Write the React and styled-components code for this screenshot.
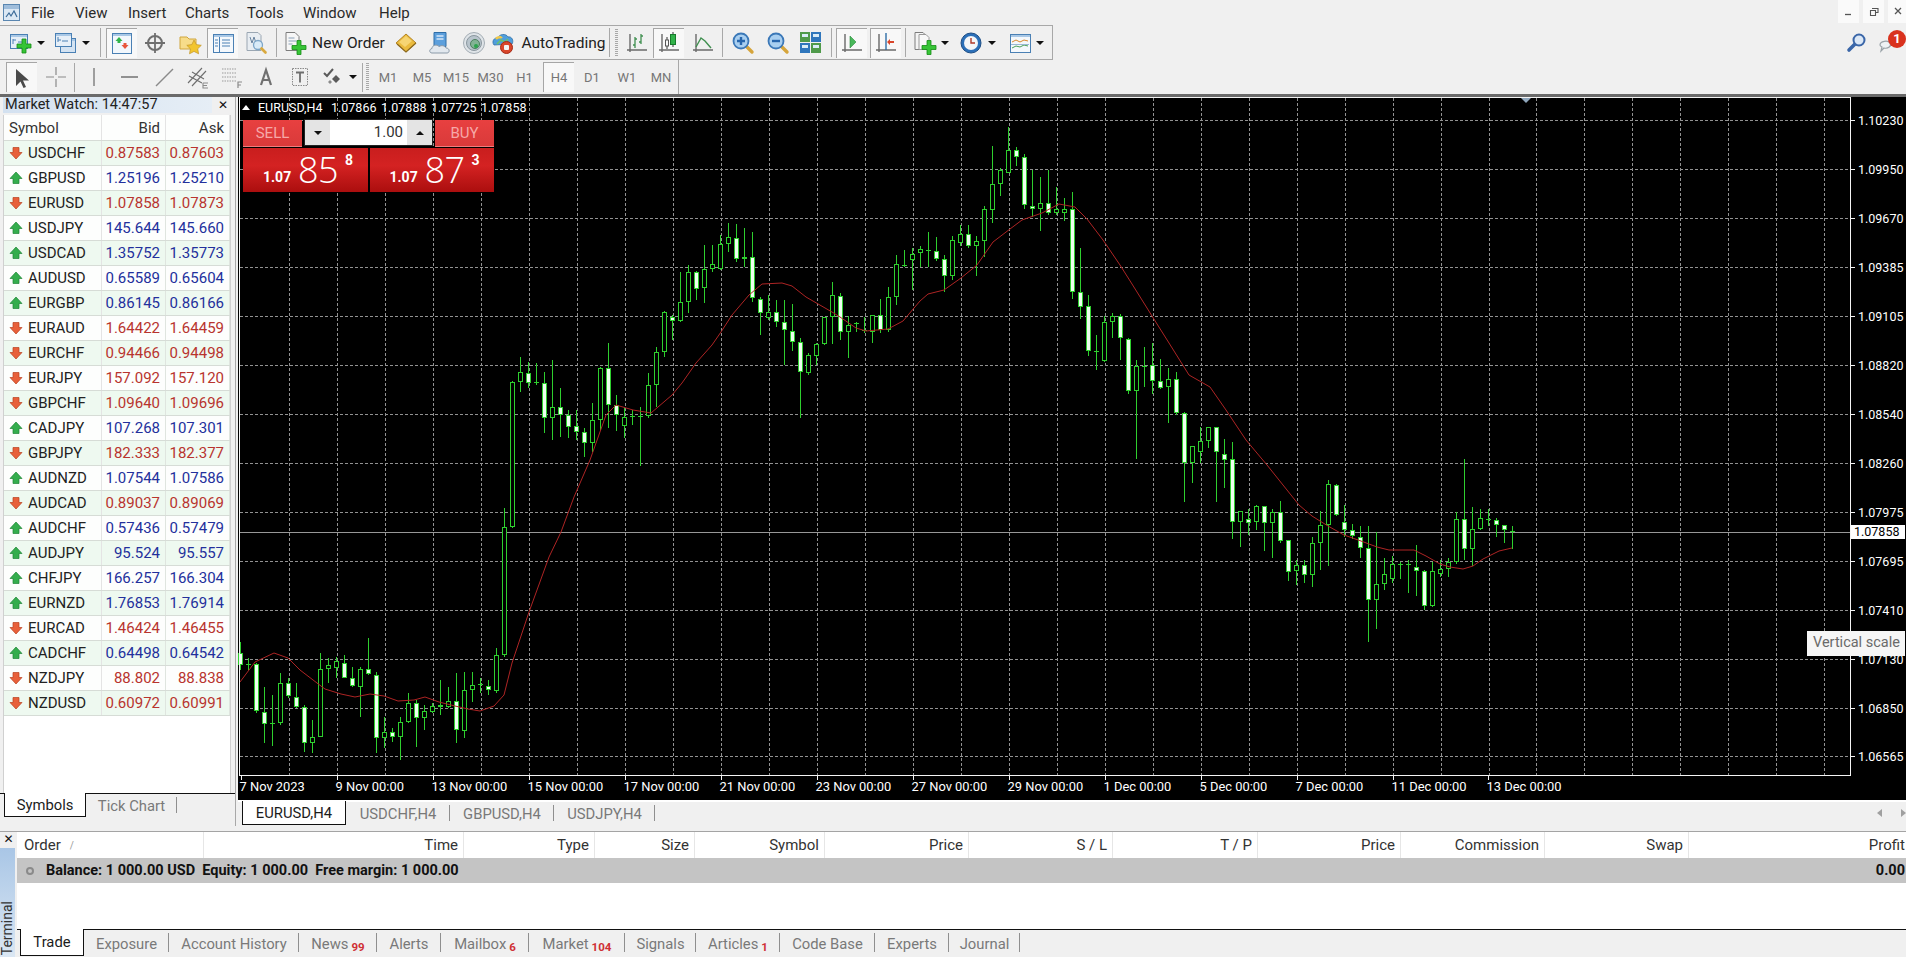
import React from 'react'
import styled, { createGlobalStyle } from 'styled-components'

const UI = `Roboto, "Liberation Sans", sans-serif`

const GlobalStyle = createGlobalStyle`
  html, body { margin: 0; padding: 0; background: #f0f0f0; overflow: hidden; }
  #root { width: 1906px; height: 957px; }
`

const Page = styled.div`
  width: 1906px;
  height: 957px;
  display: flex;
  flex-direction: column;
  background: #f0f0f0;
  font-family: ${UI};
  font-size: 15px;
  color: #222;
  overflow: hidden;
`

/* menu */
const MenuBar = styled.div`
  height: 25px;
  flex: none;
  display: flex;
  align-items: center;
  padding-left: 2px;
  position: relative;
`
const MenuItem = styled.span`
  position: absolute;
  left: ${p => p.$x}px;
  top: 4px;
  font-size: 15px;
  color: #2a2a2a;
`
const WinButtons = styled.div`
  margin-left: auto;
  display: flex;
  gap: 4px;
  height: 23px;
  align-self: flex-start;
  margin-right: -3px;
`
const WinButton = styled.div`
  width: 21px;
  height: 23px;
  background: #fafafa;
  display: flex;
  align-items: center;
  justify-content: center;
`

/* toolbars */
const ToolRow = styled.div`
  height: ${p => p.$h}px;
  flex: none;
  box-sizing: border-box;
  display: flex;
  align-items: center;
  position: relative;
  border-bottom: ${p => p.$dark ? '3px solid #6a6a6a' : 'none'};
`
const ToolGroup = styled.div`
  height: 100%;
  width: ${p => p.$w}px;
  box-sizing: border-box;
  display: flex;
  align-items: center;
  padding-left: 5px;
  border-top: ${p => p.$top ? '1px solid #a8a8a8' : 'none'};
  border-bottom: ${p => p.$bottom ? '1px solid #a8a8a8' : 'none'};
  border-right: 1px solid #a8a8a8;
`
const ToolBtn = styled.div`
  width: ${p => p.$w}px;
  height: 30px;
  flex: none;
  box-sizing: border-box;
  display: flex;
  align-items: center;
  justify-content: center;
  gap: ${p => p.$gap || 0}px;
  margin-left: ${p => p.$ml || 0}px;
  background: ${p => p.$pressed ? '#f8f8f8' : 'transparent'};
  border-top: ${p => p.$pressed ? '1px solid #a6a6a6' : 'none'};
  border-left: ${p => p.$pressed ? '1px solid #a6a6a6' : 'none'};
  font-size: 15.5px;
  color: #222;
`
const Sep = styled.div`
  width: 1px;
  height: 29px;
  flex: none;
  background: #a8a8a8;
  margin: 0 ${p => p.$m || 0}px;
`
const Grip = styled.div`
  width: 3px;
  height: 28px;
  flex: none;
  margin: 0 ${p => p.$m || 0}px;
  background: repeating-linear-gradient(to bottom, #a8a8a8 0 1px, #f0f0f0 1px 2px);
`
const Caret = styled.i`
  display: block;
  width: 0;
  height: 0;
  border-left: 4px solid transparent;
  border-right: 4px solid transparent;
  border-top: 4px solid #111;
`
const TfBtn = styled(ToolBtn)`
  font-size: 13px;
  color: #767676;
`
const SearchSpot = styled.div`
  position: absolute;
  left: 1846px;
  top: 7px;
`
const ChatSpot = styled.div`
  position: absolute;
  left: 1878px;
  top: 12px;
`
const AlertBadge = styled.div`
  position: absolute;
  left: 1888px;
  top: 5px;
  width: 18px;
  height: 18px;
  border-radius: 50%;
  background: #d9321e;
  color: #fff;
  text-align: center;
  line-height: 18px;
  font-size: 13px;
  font-weight: 700;
`

/* main */
const Main = styled.div`
  height: 729px;
  flex: none;
  display: flex;
`
const Watch = styled.div`
  width: 236px;
  flex: none;
  box-sizing: border-box;
  display: flex;
  flex-direction: column;
  border-right: 1px solid #a8a8a8;
`
const WatchTitle = styled.div`
  height: 16px;
  flex: none;
  display: flex;
  align-items: center;
  justify-content: space-between;
  padding: 0 7px 0 3px;
`
const WatchCaption = styled.div`
  width: 209px;
  height: 16px;
  padding-left: 2px;
  box-sizing: border-box;
  line-height: 16px;
  font-size: 14.5px;
  white-space: nowrap;
  background: linear-gradient(to right, #d3e1f0, #e6eef6);
`
const CloseX = styled.span`
  font-family: "DejaVu Sans", sans-serif;
  font-size: 12px;
  line-height: 14px;
  color: #111;
`
const WatchTable = styled.div`
  flex: 1;
  margin: 2px 4px 0 3px;
  background: #fff;
  border-left: 1px solid #d0d0d0;
  border-right: 1px solid #d0d0d0;
  display: flex;
  flex-direction: column;
`
const Row = styled.div`
  display: grid;
  grid-template-columns: 98px 64px 64px;
  height: ${p => p.$h}px;
  flex: none;
  box-sizing: border-box;
  border-bottom: 1px solid #d6dcd6;
  background: ${p => p.$tint ? '#eef9f0' : '#fdfefd'};
`
const HeadCell = styled.div`
  display: flex;
  align-items: center;
  justify-content: ${p => p.$left ? 'flex-start' : 'flex-end'};
  padding: 0 5px;
  font-size: 15px;
  color: #333;
  border-right: 1px solid #e4e4e4;
`
const SymCell = styled(HeadCell)`
  padding-left: 5px;
  gap: 5px;
  color: #222;
`
const PriceCell = styled.div`
  display: flex;
  align-items: center;
  justify-content: flex-end;
  padding-right: 5px;
  font-size: 15px;
  color: ${p => p.$down ? '#b8342e' : '#23309c'};
  border-right: 1px solid #dfe5df;
`

/* tabs */
const TabStrip = styled.div`
  height: ${p => p.$h}px;
  flex: none;
  box-sizing: border-box;
  display: flex;
  padding-left: ${p => p.$pad}px;
  padding-bottom: ${p => p.$pb || 0}px;
  border-top: ${p => p.$line ? '1px solid #111' : 'none'};
  align-items: stretch;
`
const Tab = styled.div`
  width: ${p => p.$w}px;
  flex: none;
  box-sizing: border-box;
  position: relative;
  display: flex;
  align-items: center;
  justify-content: center;
  font-size: 14.8px;
  color: ${p => p.$active ? '#1c1c1c' : '#797979'};
  background: ${p => p.$active ? '#fff' : 'transparent'};
  margin-top: ${p => p.$active ? '-1px' : '0'};
  margin-bottom: ${p => p.$active ? '1px' : '0'};
  border: ${p => p.$active ? '1px solid #111' : 'none'};
  border-top: none;
  &::after {
    content: '';
    display: ${p => p.$active ? 'none' : 'block'};
    position: absolute;
    right: 0;
    top: 3px;
    bottom: 5px;
    width: 1px;
    background: #8f8f8f;
  }
`
const TabCount = styled.b`
  color: #cf2f35;
  font-size: 11.5px;
  align-self: flex-end;
  margin: 0 0 3px 3px;
`

/* chart */
const ChartCol = styled.div`
  flex: 1;
  min-width: 0;
  display: flex;
  flex-direction: column;
  margin-left: 2px;
`
const ChartBox = styled.div`
  position: relative;
  height: 703px;
  flex: none;
  background: #000;
  border-bottom: 2px solid #fff;
`
const ChartSvg = styled.svg`
  display: block;
`
const AxisText = styled.text`
  font-family: ${UI};
  font-size: 12.5px;
  fill: #fff;
`
const TimeText = styled(AxisText)`
  font-size: 12.9px;
`
const ChartTitle = styled.div`
  position: absolute;
  left: 4px;
  top: 2px;
  display: flex;
  align-items: center;
  color: #fff;
  font-size: 12.5px;
  height: 16px;
  white-space: nowrap;
`
const TitleTri = styled.i`
  width: 0;
  height: 0;
  border-left: 4px solid transparent;
  border-right: 4px solid transparent;
  border-bottom: 5px solid #fff;
  margin-right: 8px;
`
const TitleNum = styled.span`
  width: 50px;
  flex: none;
`
const TitleName = styled.span`
  width: 73px;
  flex: none;
`
const OneClick = styled.div`
  position: absolute;
  left: 5px;
  top: 23px;
  width: 251px;
  display: flex;
  flex-direction: column;
  gap: 1px;
`
const TradeRow = styled.div`
  display: flex;
  height: 27px;
`
const SideLabel = styled.div`
  width: ${p => p.$w}px;
  flex: none;
  box-sizing: border-box;
  display: flex;
  align-items: center;
  justify-content: center;
  background: linear-gradient(to bottom, #e84040, #d93a3a);
  border-bottom: 1px solid #ee7d7d;
  color: #f6a8a8;
  font-size: 15px;
`
const Stepper = styled.div`
  width: 127px;
  height: 25px;
  flex: none;
  margin: 0 3px;
  display: grid;
  grid-template-columns: 25px 1fr 25px;
  background: #fff;
  outline: 1px solid #222;
`
const StepBtn = styled.div`
  background: #e4e4e4;
  display: flex;
  align-items: center;
  justify-content: center;
`
const StepUp = styled(Caret)`
  border-top: none;
  border-bottom: 4px solid #111;
`
const StepValue = styled.div`
  text-align: right;
  line-height: 25px;
  padding-right: 4px;
  font-size: 15px;
  color: #333;
`
const PriceRow = styled.div`
  display: flex;
  gap: 2px;
`
const PriceBtn = styled.div`
  flex: 1;
  height: 44px;
  position: relative;
  color: #fff;
  background: linear-gradient(to bottom, #c91e1e, #d42222 40%, #ab0e0e);
`
const PriceBase = styled.span`
  position: absolute;
  left: 20px;
  top: 21px;
  font-weight: 700;
  font-size: 14px;
`
const PriceBig = styled.span`
  position: absolute;
  left: 55px;
  top: -3px;
  font-family: "Open Sans", sans-serif;
  font-weight: 300;
  font-size: 36px;
  letter-spacing: -0.5px;
`
const PriceTail = styled.span`
  position: absolute;
  left: 102px;
  top: 4px;
  font-weight: 700;
  font-size: 14px;
`
const ScaleTip = styled.div`
  position: absolute;
  left: 1569px;
  top: 534px;
  width: 98px;
  height: 25px;
  box-sizing: border-box;
  padding-left: 6px;
  line-height: 24px;
  background: #f6f6f6;
  color: #6a6a6a;
  font-size: 14.5px;
  white-space: nowrap;
`
const PriceTag = styled.div`
  position: absolute;
  left: 1613px;
  top: 428px;
  width: 54px;
  height: 14px;
  line-height: 14px;
  padding-left: 3px;
  box-sizing: border-box;
  background: #fff;
  color: #000;
  font-size: 12.5px;
`
const ChartTabs = styled.div`
  flex: 1;
  display: flex;
  padding-left: 4px;
  position: relative;
`
const TabArrows = styled.div`
  position: absolute;
  right: 0;
  top: 7px;
  display: flex;
  gap: 19px;
`
const ArrowL = styled.i`
  width: 0;
  height: 0;
  border-top: 4px solid transparent;
  border-bottom: 4px solid transparent;
  border-right: 5px solid #a0a0a0;
`
const ArrowR = styled.i`
  width: 0;
  height: 0;
  border-top: 4px solid transparent;
  border-bottom: 4px solid transparent;
  border-left: 5px solid #a0a0a0;
`

/* terminal */
const Terminal = styled.div`
  flex: 1;
  display: flex;
  margin-top: 5px;
  border-top: 1px solid #a4a4a4;
  min-height: 0;
`
const SideStrip = styled.div`
  width: 17px;
  flex: none;
  display: flex;
  flex-direction: column;
  align-items: stretch;
`
const SideClose = styled.div`
  height: 16px;
  flex: none;
  text-align: center;
  line-height: 12px;
`
const SideBlue = styled.div`
  flex: 1;
  margin-right: 2px;
  display: flex;
  align-items: flex-end;
  justify-content: center;
  background: linear-gradient(to bottom, #a9c6e6, #dbe7f3);
`
const SideText = styled.span`
  writing-mode: vertical-rl;
  transform: rotate(180deg);
  font-size: 14px;
  line-height: 15px;
  padding-top: 2px;
  color: #333;
`
const TermBody = styled.div`
  flex: 1;
  min-width: 0;
  display: flex;
  flex-direction: column;
  background: #fff;
`
const TermHead = styled.div`
  height: 26px;
  flex: none;
  display: flex;
`
const TermCol = styled.div`
  width: ${p => p.$w}px;
  flex: none;
  box-sizing: border-box;
  display: flex;
  align-items: center;
  justify-content: ${p => p.$left ? 'flex-start' : 'flex-end'};
  padding: 0 ${p => p.$last ? 1 : 5}px 0 ${p => p.$left ? 7 : 0}px;
  border-right: ${p => p.$last ? 'none' : '1px solid #e6e6e6'};
  font-size: 15px;
  color: #333;
`
const SortMark = styled.span`
  color: #999;
  font-size: 10px;
  margin-left: 9px;
`
const Summary = styled.div`
  height: 25px;
  flex: none;
  background: #c4c4c4;
  display: flex;
  align-items: center;
  padding: 0 1px 0 9px;
  font-weight: 700;
  font-size: 14.5px;
  color: #111;
  white-space: pre;
`
const SummaryDot = styled.i`
  width: 8px;
  height: 8px;
  border-radius: 50%;
  border: 2px solid #8a8a8a;
  box-sizing: border-box;
  margin-right: 12px;
`
const SummaryEnd = styled.span`
  margin-left: auto;
`
const TermBlank = styled.div`
  flex: 1;
`
const TermTabs = styled(TabStrip)`
  background: #f0f0f0;
`
const IconSvg = styled.svg`
  display: block;
  flex: none;
`

/* ---- data ---- */
const MENUS = [['File', 31], ['View', 75], ['Insert', 128], ['Charts', 185], ['Tools', 247], ['Window', 303], ['Help', 379]]

const SYMBOLS = [
  ['USDCHF', '0.87583', '0.87603', 1], ['GBPUSD', '1.25196', '1.25210', 0], ['EURUSD', '1.07858', '1.07873', 1],
  ['USDJPY', '145.644', '145.660', 0], ['USDCAD', '1.35752', '1.35773', 0], ['AUDUSD', '0.65589', '0.65604', 0],
  ['EURGBP', '0.86145', '0.86166', 0], ['EURAUD', '1.64422', '1.64459', 1], ['EURCHF', '0.94466', '0.94498', 1],
  ['EURJPY', '157.092', '157.120', 1], ['GBPCHF', '1.09640', '1.09696', 1], ['CADJPY', '107.268', '107.301', 0],
  ['GBPJPY', '182.333', '182.377', 1], ['AUDNZD', '1.07544', '1.07586', 0], ['AUDCAD', '0.89037', '0.89069', 1],
  ['AUDCHF', '0.57436', '0.57479', 0], ['AUDJPY', '95.524', '95.557', 0], ['CHFJPY', '166.257', '166.304', 0],
  ['EURNZD', '1.76853', '1.76914', 0], ['EURCAD', '1.46424', '1.46455', 1], ['CADCHF', '0.64498', '0.64542', 0],
  ['NZDJPY', '88.802', '88.838', 1], ['NZDUSD', '0.60972', '0.60991', 1],
]

const PRICES = ['1.10230', '1.09950', '1.09670', '1.09385', '1.09105', '1.08820', '1.08540', '1.08260', '1.07975', '1.07695', '1.07410', '1.07130', '1.06850', '1.06565']
const TIMES = ['7 Nov 2023', '9 Nov 00:00', '13 Nov 00:00', '15 Nov 00:00', '17 Nov 00:00', '21 Nov 00:00', '23 Nov 00:00', '27 Nov 00:00', '29 Nov 00:00', '1 Dec 00:00', '5 Dec 00:00', '7 Dec 00:00', '11 Dec 00:00', '13 Dec 00:00']

// wick top, body top, body bottom, wick bottom, kind (0 hollow, 1 filled, 2 doji)
const CANDLES = [
  [642,653,665,670,1],[658,664,665,670,2],[663,664,711,713,1],[687,712,724,743,1],[695,723,724,746,2],[673,683,723,725,0],[678,683,696,698,1],[683,697,707,708,1],
  [705,707,743,752,1],[720,737,743,753,0],[653,669,737,737,0],[658,665,669,683,0],[657,661,668,678,0],[655,663,678,678,1],[667,678,686,687,1],[667,669,687,717,0],
  [638,669,674,675,1],[672,675,738,753,1],[717,732,738,748,0],[728,732,737,742,1],[717,722,737,760,0],[693,703,722,723,0],[700,703,718,747,1],[705,711,718,730,0],
  [703,706,712,713,0],[680,705,707,715,1],[687,701,707,708,0],[673,701,730,743,1],[672,690,731,738,0],[672,685,690,702,0],[678,684,685,693,2],[680,686,690,695,1],
  [648,655,691,693,0],[508,527,655,657,0],[381,382,527,528,0],[357,372,382,392,0],[362,373,383,388,1],[363,382,383,385,2],[372,383,418,433,1],[360,407,418,440,0],
  [388,407,415,437,1],[410,415,427,438,1],[410,426,432,440,1],[428,432,443,457,1],[403,420,443,452,0],[367,368,420,430,0],[343,368,405,428,1],[395,405,415,431,1],
  [408,417,426,438,0],[410,416,417,425,2],[407,416,417,466,2],[373,385,416,418,0],[347,352,385,407,0],[311,312,352,357,0],[315,317,321,340,1],[272,302,321,322,0],
  [265,272,302,313,0],[271,272,289,300,1],[245,269,288,303,0],[245,264,269,272,0],[235,244,269,270,0],[223,237,244,252,0],[224,238,259,262,1],[228,257,259,267,0],
  [232,257,298,302,1],[297,299,313,335,1],[295,312,318,320,0],[300,312,322,327,1],[300,322,330,365,1],[304,331,342,351,1],[338,342,372,418,1],[353,355,373,375,0],
  [343,344,356,365,0],[317,317,344,345,0],[282,295,317,344,0],[293,296,332,340,1],[316,325,332,358,0],[322,323,324,332,2],[317,330,331,333,2],[315,315,332,343,0],
  [299,315,330,333,1],[287,297,330,332,0],[255,264,297,305,0],[250,265,266,267,2],[248,254,260,290,0],[246,249,253,267,0],[232,250,251,267,2],[237,251,259,261,1],
  [255,259,276,292,1],[236,240,276,280,0],[225,234,243,246,0],[225,234,246,248,1],[236,241,246,276,0],[206,209,241,257,0],[146,184,210,223,0],[168,170,184,196,0],
  [127,150,173,173,0],[147,150,157,166,1],[154,157,205,209,1],[170,206,209,217,1],[177,203,209,231,0],[170,203,213,215,1],[187,209,213,215,0],[198,209,213,221,0],
  [192,209,292,299,1],[248,292,307,319,1],[295,306,351,356,1],[335,351,354,370,2],[316,322,361,362,0],[313,316,322,338,0],[314,316,338,360,1],[338,339,391,394,1],
  [360,366,391,459,0],[347,366,367,387,2],[343,365,381,394,1],[359,381,388,389,1],[368,379,387,423,0],[372,379,413,415,1],[412,413,463,502,1],[446,446,463,483,0],
  [427,441,452,463,0],[427,427,441,448,0],[427,427,452,502,1],[439,454,460,488,1],[442,459,522,539,1],[511,511,522,547,0],[509,519,523,535,1],[505,506,522,530,0],
  [506,506,523,551,1],[509,512,523,558,0],[501,512,541,543,1],[540,540,572,581,1],[560,565,571,585,0],[560,565,575,583,1],[537,543,575,587,0],[511,525,543,570,0],
  [480,484,525,566,0],[484,485,515,516,1],[505,522,530,537,1],[524,530,536,539,1],[526,537,548,558,1],[526,548,600,642,1],[532,584,600,629,0],[558,574,584,590,0],
  [556,564,579,583,0],[562,564,566,579,2],[560,564,566,593,2],[545,567,571,596,1],[570,571,606,610,1],[562,571,606,607,0],[560,569,574,577,0],[558,562,569,577,0],
  [512,519,562,564,0],[459,519,549,560,1],[507,529,549,566,0],[509,518,529,530,0],[509,519,520,526,2],[518,520,525,537,1],[525,525,530,543,1],[526,531,532,549,2],
]

const MA = [
  [241,682],[256,662],[275,653],[289,658],[301,670],[318,683],[326,689],[342,694],[356,697],[371,694],[385,696],[399,701],[415,700],[426,697],[440,702],[456,706],[469,709],[481,711],[495,706],[505,695],
  [513,663],[530,612],[550,557],[562,532],[575,497],[591,460],[607,415],[617,405],[634,410],[652,413],[673,395],[683,383],[697,363],[713,345],[722,332],[733,315],[750,295],[763,284],[783,283],[793,286],
  [807,297],[833,312],[841,317],[857,328],[867,331],[889,329],[904,321],[921,301],[929,294],[945,290],[962,278],[978,265],[994,242],[1011,229],[1023,220],[1043,213],[1060,204],[1076,207],[1088,219],
  [1104,240],[1121,265],[1133,284],[1153,316],[1170,343],[1190,375],[1211,387],[1227,410],[1247,440],[1268,465],[1288,490],[1300,505],[1313,516],[1329,526],[1345,535],[1362,541],[1378,547],[1390,550],
  [1415,550],[1427,556],[1441,564],[1451,567],[1464,569],[1474,566],[1484,559],[1500,551],[1513,548],
]

const CHART_TABS = [['EURUSD,H4', 104, true], ['USDCHF,H4', 104], ['GBPUSD,H4', 104], ['USDJPY,H4', 101]]

const COLS = [['Order', 187], ['Time', 260], ['Type', 131], ['Size', 100], ['Symbol', 130], ['Price', 144], ['S / L', 144], ['T / P', 145], ['Price', 143], ['Commission', 144], ['Swap', 144], ['Profit', 217]]

const TERM_TABS = [
  ['Trade', 64, null, true], ['Exposure', 85], ['Account History', 130], ['News', 78, '99'], ['Alerts', 64], ['Mailbox', 88, '6'],
  ['Market', 96, '104'], ['Signals', 71], ['Articles', 84, '1'], ['Code Base', 95], ['Experts', 74], ['Journal', 71],
]

/* ---- icons ---- */
const Svg = ({ w = 24, h = 24, children }) => (
  <IconSvg width={w} height={h} viewBox={`0 0 ${w} ${h}`}>{children}</IconSvg>
)
const Plus = ({ x, y }) => (
  <path transform={`translate(${x} ${y})`} d="M5 0h4v5h5v4H9v5H5V9H0V5h5z" fill="#36c436" stroke="#148a14" strokeWidth="0.8" />
)
const Win = ({ x, y, w, h, fill = '#e6eff8' }) => (
  <g>
    <rect x={x + 0.5} y={y + 0.5} width={w} height={h} fill={fill} stroke="#4a80b4" />
    <rect x={x + 1} y={y + 1} width={w - 1} height="2" fill="#a9c8e6" />
  </g>
)
const Axes = () => <path d="M5 3v18M2 19h20" stroke="#6a6a6a" strokeWidth="1.4" fill="none" />
const Lens = ({ sign }) => (
  <g>
    <path d="M14 14l7 7" stroke="#d6a53c" strokeWidth="3.4" strokeLinecap="round" />
    <circle cx="10" cy="10" r="7.5" fill="#a9cff0" stroke="#3b78b8" strokeWidth="1.8" />
    <path d={sign ? 'M6 10h8M10 6v8' : 'M6 10h8'} stroke="#2766ad" strokeWidth="2.4" />
  </g>
)

const AppIcon = () => (
  <Svg w={21} h={20}>
    <rect x="1.5" y="1.5" width="16" height="16" fill="#dce8f4" stroke="#5a86b0" />
    <rect x="2" y="2" width="15" height="4" fill="#9fbddb" />
    <path d="M4 14l3-4 2 3 3-5 3 6" stroke="#3a6a98" strokeWidth="1.2" fill="none" />
  </Svg>
)
const NewChartIcon = () => (
  <Svg>
    <Win x={1} y={3} w={17} h={14} />
    <path d="M4 8v5M4 9h3M9 11h4" stroke="#4a80b4" fill="none" />
    <Plus x={8} y={8} />
  </Svg>
)
const ProfilesIcon = () => (
  <Svg>
    <Win x={6} y={7} w={15} h={14} fill="#d4e3f2" />
    <Win x={1} y={2} w={16} h={13} />
    <path d="M4 6v5M4 9h3M8 10h6" stroke="#4a80b4" fill="none" />
  </Svg>
)
const WatchIcon = () => (
  <Svg>
    <Win x={2} y={2} w={19} h={20} fill="#f2f7fc" />
    <path d="M9 6l3.5 4h-2v2h-3v-2h-2z" fill="#31b34a" />
    <path d="M15 18l-3.5-4h2v-2h3v2h2z" fill="#e8553a" />
  </Svg>
)
const CrossIcon = () => (
  <Svg>
    <circle cx="12" cy="12" r="7" fill="none" stroke="#6e6e6e" strokeWidth="2" />
    <path d="M12 2v20M2 12h20" stroke="#6e6e6e" strokeWidth="1.8" />
  </Svg>
)
const FolderIcon = () => (
  <Svg>
    <path d="M2 6h7l2 2h7v10H2z" fill="#f7dc8a" stroke="#d0a63e" />
    <path d="M16 9l2.3 4.6 5 .7-3.6 3.5.9 5-4.6-2.4-4.5 2.4.9-5-3.6-3.5 5-.7z" fill="#f2c52e" stroke="#c2952a" strokeWidth="0.7" />
  </Svg>
)
const NavigatorIcon = () => (
  <Svg>
    <Win x={2} y={3} w={20} h={18} fill="#f4f8fc" />
    <path d="M8.5 6v15" stroke="#4a80b4" />
    <path d="M4 9h3M4 12h3M4 15h3M11 9h8M11 12h8M11 15h8" stroke="#4a80b4" />
  </Svg>
)
const TesterIcon = () => (
  <Svg>
    <path d="M3 1.5h11l3 3v15H3z" fill="#e8edf2" stroke="#9aa6b2" />
    <path d="M6 6l2 6 2-6 2 6" stroke="#6a84a0" fill="none" />
    <circle cx="14" cy="14" r="4.5" fill="#d9ebf8" stroke="#7da6c8" strokeWidth="1.3" />
    <path d="M17.5 17.5l4 4" stroke="#d9a93e" strokeWidth="2.6" strokeLinecap="round" />
  </Svg>
)
const OrderIcon = () => (
  <Svg>
    <path d="M3 1.5h9l4 4v14H3z" fill="#f6f6f6" stroke="#7c7c7c" />
    <path d="M5.5 7h6M5.5 10h8M5.5 13h4" stroke="#8aa0b8" />
    <Plus x={9} y={9.5} />
  </Svg>
)
const EditorIcon = () => (
  <Svg>
    <path d="M2 12L12 3l10 9-10 9z" fill="#eabb3e" stroke="#b48424" />
    <path d="M5 11l7-6 6 5-7 6z" fill="#f6d573" />
    <path d="M3 13l9 8 10-9" stroke="#8c6a20" fill="none" strokeWidth="1.2" />
  </Svg>
)
const CloudIcon = () => (
  <Svg>
    <path d="M6 1.5h12v14H6z" fill="#5c9fdc" stroke="#2e6ea8" />
    <path d="M8.5 5h7M8.5 8h7" stroke="#d6e8f8" strokeWidth="1.3" />
    <path d="M4 22c-3 0-3-4 0-4.5C4 14 9 13 11 15.500c2.500-1.500 6-1 7 1.500 4 0 4 5 1 5z" fill="#e2e8ee" stroke="#8b9aa8" />
  </Svg>
)
const SignalIcon = () => (
  <Svg>
    <circle cx="12" cy="12" r="10.5" fill="#dfe4e8" stroke="#a4adb4" />
    <circle cx="12" cy="12" r="7.5" fill="#b8c4cc" stroke="#8b979f" />
    <circle cx="13" cy="13" r="4.5" fill="#82b394" stroke="#4d7f5f" />
    <circle cx="14" cy="15" r="2" fill="#2ba34c" />
  </Svg>
)
const AutoIcon = () => (
  <Svg>
    <path d="M3 14C0 10 4 6 7 7c1-4 8-5 10-1 4-1 6 4 4 7z" fill="#4f9edc" stroke="#2f6ea6" strokeWidth="0.8" />
    <path d="M5 8c2-3 5-1 6-2" stroke="#f1c84a" strokeWidth="2.4" fill="none" />
    <path d="M6 13l4-4 4 2 3-3" stroke="#6cc26a" strokeWidth="1.6" fill="none" />
    <circle cx="15.5" cy="16.5" r="6" fill="#d9462b" stroke="#a52a16" />
    <rect x="13" y="14" width="5" height="5" fill="#f4f4f4" rx="1" />
  </Svg>
)
const BarTypeIcon = () => (
  <Svg>
    <Axes />
    <path d="M10 6v11M8 14h2M10 8h2M16 3v10M14 11h2M16 5h2" stroke="#3f8f4f" strokeWidth="1.3" fill="none" />
  </Svg>
)
const CandleTypeIcon = () => (
  <Svg>
    <Axes />
    <path d="M10 6v12M16 1v15" stroke="#333" fill="none" />
    <rect x="8.5" y="9" width="3" height="6" fill="#f8f8f8" stroke="#555" />
    <rect x="13.5" y="3.5" width="5" height="10" fill="#31b34a" stroke="#187a2c" />
  </Svg>
)
const LineTypeIcon = () => (
  <Svg>
    <Axes />
    <path d="M5 16l5-9 4 3 6 7" stroke="#3f8f4f" strokeWidth="1.4" fill="none" />
  </Svg>
)
const ZoomInIcon = () => <Svg><Lens sign /></Svg>
const ZoomOutIcon = () => <Svg><Lens /></Svg>
const TileIcon = () => (
  <Svg>
    <rect x="1" y="1" width="10" height="10" fill="#4f9a4a" />
    <rect x="12" y="1" width="10" height="10" fill="#2f76bc" />
    <rect x="1" y="12" width="10" height="10" fill="#2f76bc" />
    <rect x="12" y="12" width="10" height="10" fill="#4f9a4a" />
    <path d="M3 3h6v3H3zM14 3h6v3h-6zM3 14h6v3H3zM14 14h6v3h-6z" fill="#d9ecf7" />
  </Svg>
)
const ScrollIcon = () => (
  <Svg>
    <Axes />
    <path d="M10 5l6 6-6 6z" fill="#49b85a" stroke="#2a8a3c" strokeWidth="0.6" />
  </Svg>
)
const ShiftIcon = () => (
  <Svg>
    <Axes />
    <path d="M12 2v17" stroke="#2f6ea6" strokeWidth="1.4" />
    <path d="M20 10h-4v-2l-3 3 3 3v-2h4z" fill="#d9462b" />
  </Svg>
)
const IndicatorIcon = () => (
  <Svg>
    <path d="M2 1.5h8l3 3v14H2z" fill="#f4f4f4" stroke="#7c7c7c" />
    <path d="M6 3.5h7l3 3v12H6z" fill="#f8f8f8" stroke="#9a9a9a" />
    <Plus x={9} y={9.5} />
  </Svg>
)
const ClockIcon = () => (
  <Svg>
    <circle cx="12" cy="12" r="10" fill="#2b6fb8" stroke="#1f4f86" />
    <circle cx="12" cy="12" r="7" fill="#f4f6f8" />
    <path d="M12 7v5h4" stroke="#b03a2a" strokeWidth="1.4" fill="none" />
  </Svg>
)
const TemplateIcon = () => (
  <Svg>
    <Win x={2} y={3} w={20} h={18} fill="#f4f8fc" />
    <path d="M4 11l4-2 4 2 4-2 4 1" stroke="#d9862b" fill="none" />
    <path d="M4 17l4-2 4 1 4-2 4 1" stroke="#49a05a" fill="none" />
    <path d="M3 13.5h18" stroke="#9ab8d4" />
  </Svg>
)
const ArrowIcon = () => (
  <Svg>
    <path d="M6 3v17l4.5-4.5 3 6.5 2.5-1-3-6.5H19z" fill="#4a4a4a" />
  </Svg>
)
const CrosshairIcon = () => (
  <Svg>
    <path d="M12 2v8M12 14v8M2 12h8M14 12h8" stroke="#8a8a8a" strokeWidth="1.2" />
  </Svg>
)
const VLineIcon = () => <Svg><path d="M12 3v18" stroke="#8a8a8a" strokeWidth="1.6" /></Svg>
const HLineIcon = () => <Svg><path d="M3 12h17" stroke="#7a7a7a" strokeWidth="1.6" /></Svg>
const TrendIcon = () => <Svg><path d="M4 21L21 4" stroke="#8a8a8a" strokeWidth="1.5" /></Svg>
const ChannelIcon = () => (
  <Svg>
    <path d="M2 18L16 3M6 21L20 6M3 11l13 7M6 7l12 7" stroke="#6e6e6e" strokeWidth="1.1" fill="none" />
    <path d="M17 18h5M17 18v5h5M17 20.5h4" stroke="#8a8a8a" strokeWidth="1.1" fill="none" />
  </Svg>
)
const FiboIcon = () => (
  <Svg>
    <path d="M3 4h15M3 8h15M3 12h15M3 16h15" stroke="#9a9a9a" strokeDasharray="1.5 1" />
    <path d="M19 23v-6h4M19 20h3" stroke="#8a8a8a" strokeWidth="1.2" fill="none" />
  </Svg>
)
const TextAIcon = () => (
  <Svg>
    <path d="M7 20l5-15 5 15M9 15h6" stroke="#707070" strokeWidth="2.2" fill="none" />
  </Svg>
)
const LabelIcon = () => (
  <Svg>
    <rect x="4.5" y="3.5" width="15" height="17" fill="none" stroke="#8a8a8a" strokeDasharray="1.5 1" />
    <path d="M8 7.5h8M12 7.5v10" stroke="#6e6e6e" strokeWidth="1.8" />
  </Svg>
)
const ShapesIcon = () => (
  <Svg>
    <path d="M3 8l3 3 6-7" stroke="#5a5a5a" strokeWidth="2" fill="none" />
    <path d="M15 10l4 4-4 4-4-4z" fill="#5a5a5a" />
    <path d="M9 15l2 2-2 2-2-2z" fill="#8a8a8a" />
  </Svg>
)
const SearchIcon = () => (
  <Svg w={20} h={22}>
    <path d="M9 12l-6 6" stroke="#3a66a8" strokeWidth="3.6" strokeLinecap="round" />
    <circle cx="13" cy="8" r="5.5" fill="#dce8f6" stroke="#3a66a8" strokeWidth="2" />
  </Svg>
)
const ChatIcon = () => (
  <Svg w={16} h={16}>
    <path d="M2 8c0-4 8-5 10-2s-2 6-6 5l-3 3 1-4c-1-.5-2-1-2-2z" fill="#eef2f4" stroke="#9aa3a8" strokeWidth="1.2" />
  </Svg>
)
const DownArrow = () => (
  <Svg w={14} h={14}>
    <path d="M4 1.5h6v5h3L7 13 1 6.5h3z" fill="#e8603a" stroke="#b8401e" strokeWidth="0.7" />
  </Svg>
)
const UpArrow = () => (
  <Svg w={14} h={14}>
    <path d="M7 1l6 6.5h-3v5H4v-5H1z" fill="#34ad4c" stroke="#1e8436" strokeWidth="0.7" />
  </Svg>
)

/* ---- chart drawing, coordinates are page pixels ---- */
const gridX = Array.from({ length: 33 }, (_, k) => Math.round(290 + 47.98 * k) + 0.5)
const gridY = PRICES.map((_, k) => Math.round(120 + 48.96 * k) + 0.5)
const tickX = TIMES.map((_, k) => Math.round(242 + 95.96 * k) + 0.5)

const Candle = ({ c, i }) => {
  const x = 241 + 8 * i + 0.5
  const [wt, bt, bb, wb, kind] = c
  return (
    <g>
      <path d={`M${x} ${wt}V${wb}`} stroke="#2ecf2e" />
      {kind === 2
        ? <path d={`M${x - 2.5} ${bt + 0.5}h5`} stroke="#2ecf2e" />
        : <rect x={x - 2} y={bt + 0.5} width="4" height={Math.max(bb - bt - 1, 1)} fill={kind === 1 ? '#eefff0' : '#000'} stroke="#2ecf2e" />}
    </g>
  )
}

const ChartDrawing = () => (
  <ChartSvg width="1667" height="703" viewBox="239 97 1667 703">
    <g stroke="#929292" strokeDasharray="3 2" shapeRendering="crispEdges">
      {gridX.map(x => <path key={x} d={`M${x} 98V775`} />)}
      {gridY.map(y => <path key={y} d={`M241 ${y}H1851`} />)}
    </g>
    <path d="M240 532.5H1851" stroke="#989898" shapeRendering="crispEdges" />
    <g shapeRendering="crispEdges">
      {CANDLES.map((c, i) => <Candle key={i} c={c} i={i} />)}
    </g>
    <polyline points={MA.map(p => p.join(',')).join(' ')} fill="none" stroke="#ad2424" strokeWidth="1" />
    <rect x="240.5" y="97.5" width="1611" height="678" fill="none" stroke="#f4f4f4" shapeRendering="crispEdges" />
    <path d="M1522 98h10l-5 5z" fill="#8fa6bc" />
    <g stroke="#f4f4f4" shapeRendering="crispEdges">
      {gridY.map(y => <path key={y} d={`M1852 ${y}h4`} />)}
      {tickX.map(x => <path key={x} d={`M${x} 776v4`} />)}
    </g>
    {PRICES.map((p, k) => <AxisText key={p} x="1859" y={gridY[k] + 4.5}>{p}</AxisText>)}
    {TIMES.map((t, k) => <TimeText key={t} x={tickX[k] - 2} y="791">{t}</TimeText>)}
  </ChartSvg>
)

const PricePanel = ({ big, tail }) => (
  <PriceBtn>
    <PriceBase>1.07</PriceBase>
    <PriceBig>{big}</PriceBig>
    <PriceTail>{tail}</PriceTail>
  </PriceBtn>
)

const App = () => (
  <Page>
    <GlobalStyle />
    <MenuBar>
      <AppIcon />
      {MENUS.map(([m, x]) => <MenuItem key={m} $x={x}>{m}</MenuItem>)}
      <WinButtons>
        <WinButton><Svg w={9} h={9}><path d="M1 7.5h6" stroke="#555" strokeWidth="1.3" /></Svg></WinButton>
        <WinButton><Svg w={10} h={10}><path d="M3 1.5h6v4H7M1.5 3.5h5v5h-5z" stroke="#555" fill="none" strokeWidth="1.1" /></Svg></WinButton>
        <WinButton><Svg w={9} h={9}><path d="M1 1l6 6M7 1L1 7" stroke="#555" strokeWidth="1.3" /></Svg></WinButton>
      </WinButtons>
    </MenuBar>

    <ToolRow $h={35}>
      <ToolGroup $w={1053} $top $bottom>
        <ToolBtn $w={44} $gap={4}><NewChartIcon /><Caret /></ToolBtn>
        <ToolBtn $w={46} $gap={4}><ProfilesIcon /><Caret /></ToolBtn>
        <Sep $m={5} />
        <ToolBtn $w={31} $pressed><WatchIcon /></ToolBtn>
        <ToolBtn $w={36}><CrossIcon /></ToolBtn>
        <ToolBtn $w={34}><FolderIcon /></ToolBtn>
        <ToolBtn $w={31} $pressed><NavigatorIcon /></ToolBtn>
        <ToolBtn $w={36}><TesterIcon /></ToolBtn>
        <Sep $m={2} />
        <ToolBtn $w={110} $gap={5}><OrderIcon />New Order</ToolBtn>
        <ToolBtn $w={34}><EditorIcon /></ToolBtn>
        <ToolBtn $w={34}><CloudIcon /></ToolBtn>
        <ToolBtn $w={34}><SignalIcon /></ToolBtn>
        <ToolBtn $w={115} $gap={6}><AutoIcon />AutoTrading</ToolBtn>
        <Sep $m={3} />
        <Grip $m={2} />
        <ToolBtn $w={33}><BarTypeIcon /></ToolBtn>
        <ToolBtn $w={31} $pressed><CandleTypeIcon /></ToolBtn>
        <ToolBtn $w={38}><LineTypeIcon /></ToolBtn>
        <Sep $m={0} />
        <ToolBtn $w={39}><ZoomInIcon /></ToolBtn>
        <ToolBtn $w={31}><ZoomOutIcon /></ToolBtn>
        <ToolBtn $w={36}><TileIcon /></ToolBtn>
        <Sep $m={2} />
        <ToolBtn $w={31} $ml={2} $pressed><ScrollIcon /></ToolBtn>
        <ToolBtn $w={31} $ml={3} $pressed><ShiftIcon /></ToolBtn>
        <Sep $m={4} />
        <ToolBtn $w={42} $gap={4}><IndicatorIcon /><Caret /></ToolBtn>
        <ToolBtn $w={50} $gap={5}><ClockIcon /><Caret /></ToolBtn>
        <ToolBtn $w={47} $gap={4}><TemplateIcon /><Caret /></ToolBtn>
      </ToolGroup>
      <SearchSpot><SearchIcon /></SearchSpot>
      <ChatSpot><ChatIcon /></ChatSpot>
      <AlertBadge>1</AlertBadge>
    </ToolRow>

    <ToolRow $h={37} $dark>
      <ToolGroup $w={679}>
        <ToolBtn $w={31} $ml={1} $pressed><ArrowIcon /></ToolBtn>
        <ToolBtn $w={37}><CrosshairIcon /></ToolBtn>
        <Sep />
        <ToolBtn $w={38}><VLineIcon /></ToolBtn>
        <ToolBtn $w={34}><HLineIcon /></ToolBtn>
        <ToolBtn $w={34}><TrendIcon /></ToolBtn>
        <ToolBtn $w={33}><ChannelIcon /></ToolBtn>
        <ToolBtn $w={34}><FiboIcon /></ToolBtn>
        <ToolBtn $w={35}><TextAIcon /></ToolBtn>
        <ToolBtn $w={34}><LabelIcon /></ToolBtn>
        <ToolBtn $w={44} $gap={4}><ShapesIcon /><Caret /></ToolBtn>
        <Sep $m={1} />
        <Grip $m={2} />
        <TfBtn $w={34}>M1</TfBtn>
        <TfBtn $w={34}>M5</TfBtn>
        <TfBtn $w={34}>M15</TfBtn>
        <TfBtn $w={35}>M30</TfBtn>
        <TfBtn $w={33}>H1</TfBtn>
        <TfBtn $w={31} $ml={2} $pressed>H4</TfBtn>
        <TfBtn $w={36}>D1</TfBtn>
        <TfBtn $w={34}>W1</TfBtn>
        <TfBtn $w={34}>MN</TfBtn>
      </ToolGroup>
    </ToolRow>

    <Main>
      <Watch>
        <WatchTitle>
          <WatchCaption>Market Watch: 14:47:57</WatchCaption>
          <CloseX>✕</CloseX>
        </WatchTitle>
        <WatchTable>
          <Row $h={26}>
            <HeadCell $left>Symbol</HeadCell>
            <HeadCell>Bid</HeadCell>
            <HeadCell>Ask</HeadCell>
          </Row>
          {SYMBOLS.map(([s, b, a, d], i) => (
            <Row key={s} $h={25} $tint={i % 2 === 0}>
              <SymCell $left>{d ? <DownArrow /> : <UpArrow />}{s}</SymCell>
              <PriceCell $down={d}>{b}</PriceCell>
              <PriceCell $down={d}>{a}</PriceCell>
            </Row>
          ))}
        </WatchTable>
        <TabStrip $h={33} $pad={4} $pb={8} $line>
          <Tab $w={82} $active>Symbols</Tab>
          <Tab $w={91}>Tick Chart</Tab>
        </TabStrip>
      </Watch>

      <ChartCol>
        <ChartBox>
          <ChartDrawing />
          <ChartTitle>
            <TitleTri />
            <TitleName>EURUSD,H4</TitleName>
            <TitleNum>1.07866</TitleNum>
            <TitleNum>1.07888</TitleNum>
            <TitleNum>1.07725</TitleNum>
            <TitleNum>1.07858</TitleNum>
          </ChartTitle>
          <OneClick>
            <TradeRow>
              <SideLabel $w={59}>SELL</SideLabel>
              <Stepper>
                <StepBtn><Caret /></StepBtn>
                <StepValue>1.00</StepValue>
                <StepBtn><StepUp /></StepBtn>
              </Stepper>
              <SideLabel $w={59}>BUY</SideLabel>
            </TradeRow>
            <PriceRow>
              <PricePanel big="85" tail="8" />
              <PricePanel big="87" tail="3" />
            </PriceRow>
          </OneClick>
          <PriceTag>1.07858</PriceTag>
          <ScaleTip>Vertical scale</ScaleTip>
        </ChartBox>
        <ChartTabs>
          {CHART_TABS.map(([t, w, active]) => <Tab key={t} $w={w} $active={active}>{t}</Tab>)}
          <TabArrows><ArrowL /><ArrowR /></TabArrows>
        </ChartTabs>
      </ChartCol>
    </Main>

    <Terminal>
      <SideStrip>
        <SideClose><CloseX>✕</CloseX></SideClose>
        <SideBlue><SideText>Terminal</SideText></SideBlue>
      </SideStrip>
      <TermBody>
        <TermHead>
          {COLS.map(([c, w], i) => (
            <TermCol key={i} $w={w} $left={i === 0} $last={i === COLS.length - 1}>
              {c}{i === 0 && <SortMark>/</SortMark>}
            </TermCol>
          ))}
        </TermHead>
        <Summary>
          <SummaryDot />
          Balance: 1 000.00 USD  Equity: 1 000.00  Free margin: 1 000.00
          <SummaryEnd>0.00</SummaryEnd>
        </Summary>
        <TermBlank />
        <TermTabs $h={28} $pad={3} $line>
          {TERM_TABS.map(([t, w, n, active]) => (
            <Tab key={t} $w={w} $active={active}>{t}{n && <TabCount>{n}</TabCount>}</Tab>
          ))}
        </TermTabs>
      </TermBody>
    </Terminal>
  </Page>
)

export default App
